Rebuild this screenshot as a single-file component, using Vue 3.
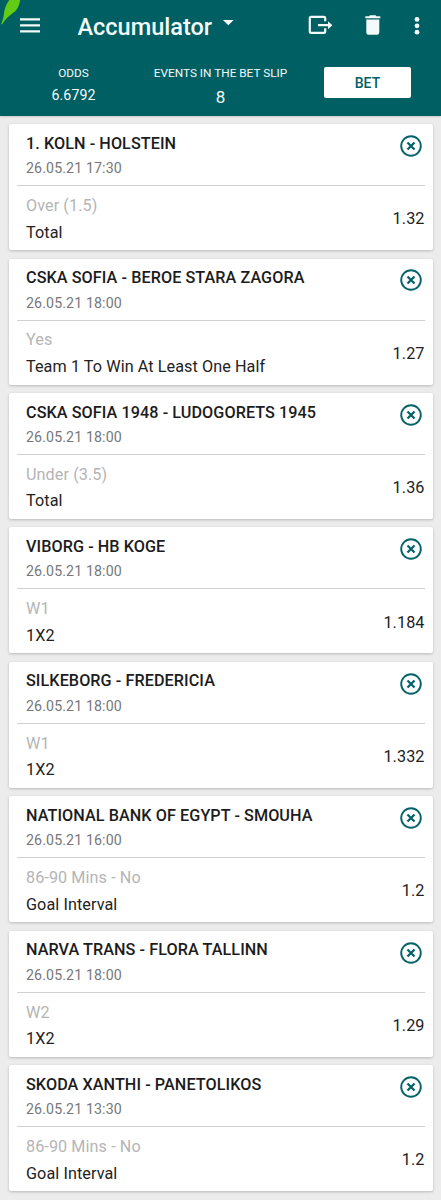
<script setup>
const bets = [
  { match: '1. KOLN - HOLSTEIN', date: '26.05.21 17:30', pick: 'Over (1.5)', market: 'Total', odds: '1.32' },
  { match: 'CSKA SOFIA - BEROE STARA ZAGORA', date: '26.05.21 18:00', pick: 'Yes', market: 'Team 1 To Win At Least One Half', odds: '1.27' },
  { match: 'CSKA SOFIA 1948 - LUDOGORETS 1945', date: '26.05.21 18:00', pick: 'Under (3.5)', market: 'Total', odds: '1.36' },
  { match: 'VIBORG - HB KOGE', date: '26.05.21 18:00', pick: 'W1', market: '1X2', odds: '1.184' },
  { match: 'SILKEBORG - FREDERICIA', date: '26.05.21 18:00', pick: 'W1', market: '1X2', odds: '1.332' },
  { match: 'NATIONAL BANK OF EGYPT - SMOUHA', date: '26.05.21 16:00', pick: '86-90 Mins - No', market: 'Goal Interval', odds: '1.2' },
  { match: 'NARVA TRANS - FLORA TALLINN', date: '26.05.21 18:00', pick: 'W2', market: '1X2', odds: '1.29' },
  { match: 'SKODA XANTHI - PANETOLIKOS', date: '26.05.21 13:30', pick: '86-90 Mins - No', market: 'Goal Interval', odds: '1.2' },
]
</script>

<template>
  <div class="screen">
    <header class="header">
      <svg class="leaf" width="22" height="26" viewBox="0 0 22 26">
        <path d="M9.300 0H20.200C19.400 4.600 18 8.200 15.500 11L12.300 13.500C8 16.500 4.500 20.300 2 24.500L1.300 24C2.500 20.500 3.600 17.300 3.900 14C4.300 9.500 6.200 4 9.300 0Z" fill="#62cc14" />
      </svg>
      <div class="toolbar">
        <svg class="menu" width="20" height="16" viewBox="0 0 20 16" fill="#f4fafa">
          <path d="M0 .2h20v2.200H0zM0 6.200h20v2.200H0zM0 12.200h20v2.200H0z" />
        </svg>
        <h1 class="title">Accumulator</h1>
        <svg class="caret" width="11" height="6" viewBox="0 0 11 6"><path d="M0 0h10.600L5.300 5.300z" fill="#fff" /></svg>
        <svg class="exit" width="26" height="20" viewBox="0 0 26 20" fill="none" stroke="#f4fafa" stroke-width="2.200">
          <path d="M17.200 6.300V3Q17.200 1.900 15.800 1.900H3.200Q1.800 1.900 1.800 3.300V16.500Q1.800 17.900 3.200 17.900H15.800Q17.200 17.900 17.200 16.500V13.200M10 10.200H21" />
          <path d="M20 6.200L24.400 10.200L20 14.200Z" fill="#f4fafa" stroke="none" />
        </svg>
        <svg class="trash" width="16" height="20" viewBox="0 0 16 20" fill="#f4fafa">
          <path d="M5 .2H10.600L11.500 1.200H15.300V3.300H.300V1.200H4.100ZM1.300 4.400H14.300V17.400Q14.300 19.700 12 19.700H3.600Q1.300 19.700 1.300 17.400Z" />
        </svg>
        <svg class="dots" width="6" height="18" viewBox="0 0 6 18" fill="#f4fafa">
          <circle cx="3" cy="2.400" r="2.400" /><circle cx="3" cy="8.800" r="2.400" /><circle cx="3" cy="15.200" r="2.400" />
        </svg>
      </div>
      <div class="summary">
        <div class="stat">
          <span class="label">ODDS</span>
          <span class="value">6.6792</span>
        </div>
        <div class="stat">
          <span class="label">EVENTS IN THE BET SLIP</span>
          <span class="value count">8</span>
        </div>
        <button class="bet">BET</button>
      </div>
    </header>

    <main class="list">
      <article v-for="bet in bets" :key="bet.match" class="card">
        <div class="top">
          <div>
            <h2 class="match">{{ bet.match }}</h2>
            <p class="date">{{ bet.date }}</p>
          </div>
          <svg class="close" width="22" height="22" viewBox="0 0 22 22" fill="none" stroke="#06636a">
            <circle cx="11" cy="11" r="9.800" stroke-width="1.900" />
            <path d="M7.500 7.500L14.500 14.500M14.500 7.500L7.500 14.500" stroke-width="2.300" />
          </svg>
        </div>
        <div class="bottom">
          <div>
            <p class="pick">{{ bet.pick }}</p>
            <p class="market">{{ bet.market }}</p>
          </div>
          <span class="price">{{ bet.odds }}</span>
        </div>
      </article>
    </main>
  </div>
</template>

<style>
body {
  background: #ececec;
}
</style>

<style scoped>
.screen {
  height: 1200px;
  overflow: hidden;
  background: #ececec;
  font-family: Roboto, sans-serif;
}
h1, h2, p {
  margin: 0;
}
.header {
  position: relative;
  box-sizing: border-box;
  height: 116px;
  background: #005f63;
  box-shadow: 0 1px 2px rgba(0, 0, 0, 0.15);
  color: #f4fafa;
}
.leaf {
  position: absolute;
  left: 0;
  top: 0;
}
.toolbar {
  display: flex;
  align-items: flex-start;
  height: 64px;
  padding-left: 20px;
}
.toolbar svg {
  flex: none;
}
.menu {
  margin-top: 18px;
}
.title {
  width: 136px;
  margin: 12px 0 0 37.500px;
  font-size: 23.500px;
  font-weight: 500;
  line-height: 30px;
  white-space: nowrap;
}
.caret {
  margin: 20px 0 0 9.500px;
}
.exit {
  margin: 15px 0 0 73.500px;
}
.trash {
  margin: 15px 0 0 31px;
}
.dots {
  margin: 17px 0 0 33.500px;
}
.summary {
  display: flex;
}
.stat {
  display: flex;
  flex-direction: column;
  align-items: center;
  width: 147px;
  white-space: nowrap;
}
.label {
  font-size: 11.800px;
  line-height: 18px;
}
.value {
  margin-top: 3px;
  font-size: 14.200px;
  line-height: 20px;
  letter-spacing: 0.100px;
}
.value.count {
  margin-top: 5px;
  font-size: 17px;
}
.bet {
  width: 87px;
  height: 31px;
  margin: 3px 0 0 30px;
  padding: 1px 0 0;
  border: 0;
  border-radius: 2px;
  background: #fff;
  color: #005f63;
  font: 500 14px/30px Roboto, sans-serif;
}
.list {
  display: flex;
  flex-direction: column;
  gap: 8.430px;
  padding: 8.200px 8.500px 0 9px;
}
.card {
  box-sizing: border-box;
  height: 126px;
  padding: 0 8px;
  border-radius: 2px;
  background: #fff;
  box-shadow: 0 1px 3px rgba(0, 0, 0, 0.22);
}
.top {
  display: flex;
  justify-content: space-between;
  box-sizing: border-box;
  height: 62px;
  padding: 9.600px 3px 0 9px;
  border-bottom: 1px solid #d0d0d0;
}
.match {
  font-size: 16.200px;
  font-weight: 500;
  line-height: 20px;
  letter-spacing: 0.070px;
  color: #1c1c1c;
  white-space: nowrap;
}
.date {
  margin-top: 5.400px;
  font-size: 14.200px;
  line-height: 18px;
  letter-spacing: 0.120px;
  color: #777;
}
.close {
  flex: none;
  margin-top: 1.200px;
}
.bottom {
  display: flex;
  justify-content: space-between;
  padding: 9.800px 0 0 9px;
}
.pick,
.market,
.price {
  font-size: 16.200px;
  line-height: 20px;
  letter-spacing: 0.080px;
}
.pick {
  color: #b5b5b5;
}
.market {
  margin-top: 6.600px;
  color: #222;
}
.price {
  margin-top: 13.300px;
  color: #222;
}
</style>
